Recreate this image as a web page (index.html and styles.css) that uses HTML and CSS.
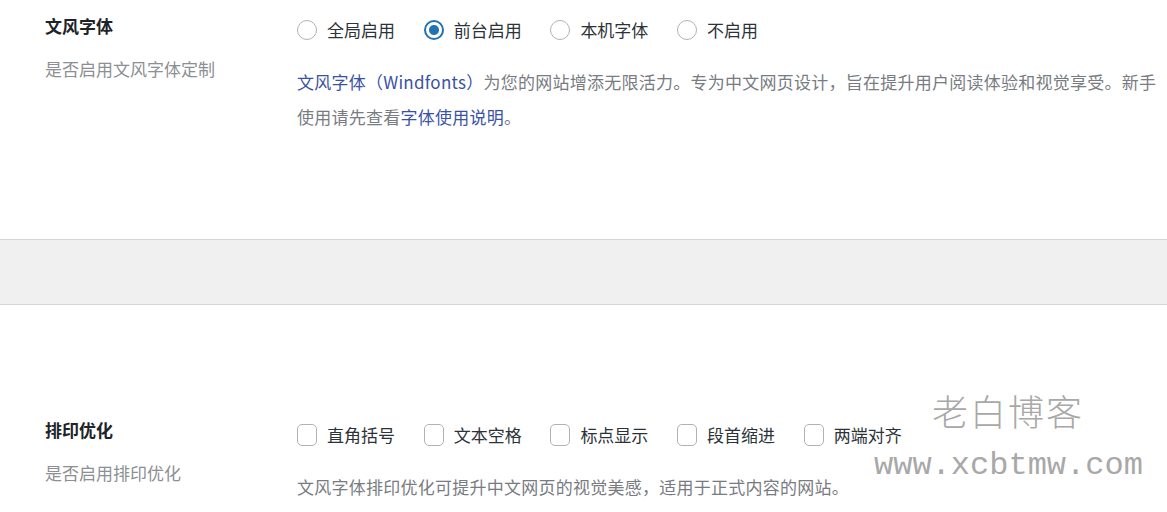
FILE: index.html
```html
<!DOCTYPE html>
<html lang="zh-CN">
<head>
  <meta charset="UTF-8">
  <meta name="viewport" content="width=device-width, initial-scale=1.0">
  <title>文风字体设置</title>
  <link rel="stylesheet" href="styles.css">
</head>
<body>

  <div class="setting setting-first">
    <div class="setting-label">
      <h3 class="setting-title">文风字体</h3>
      <p class="setting-sub">是否启用文风字体定制</p>
    </div>
    <div class="setting-field">
      <div class="option-list">
        <label class="option"><input type="radio" name="mode" class="radio"> 全局启用</label>
        <label class="option"><input type="radio" name="mode" class="radio" checked> 前台启用</label>
        <label class="option"><input type="radio" name="mode" class="radio"> 本机字体</label>
        <label class="option"><input type="radio" name="mode" class="radio"> 不启用</label>
      </div>
      <p class="setting-desc"><a href="#" class="link">文风字体（Windfonts）</a>为您的网站增添无限活力。专为中文网页设计，旨在提升用户阅读体验和视觉享受。新手使用请先查看<a href="#" class="link">字体使用说明</a>。</p>
    </div>
  </div>

  <div class="divider"></div>

  <div class="setting setting-second">
    <div class="setting-label">
      <h3 class="setting-title">排印优化</h3>
      <p class="setting-sub">是否启用排印优化</p>
    </div>
    <div class="setting-field">
      <div class="option-list">
        <label class="option"><input type="checkbox" class="check"> 直角括号</label>
        <label class="option"><input type="checkbox" class="check"> 文本空格</label>
        <label class="option"><input type="checkbox" class="check"> 标点显示</label>
        <label class="option"><input type="checkbox" class="check"> 段首缩进</label>
        <label class="option"><input type="checkbox" class="check"> 两端对齐</label>
      </div>
      <p class="setting-desc">文风字体排印优化可提升中文网页的视觉美感，适用于正式内容的网站。</p>
    </div>
  </div>

  <div class="watermark">
    <div class="watermark-name">老白博客</div>
    <div class="watermark-url">www.xcbtmw.com</div>
  </div>

</body>
</html>
```

FILE: styles.css
```css
* {
  margin: 0;
  padding: 0;
  box-sizing: border-box;
}

html {
  background: #fff;
}

body {
  position: relative;
  font-family: "Noto Sans CJK SC", "Noto Sans", sans-serif;
  font-size: 17px;
  color: #3c434a;
  overflow: hidden;
}

.setting {
  display: flex;
  background: #fff;
}

.setting-first {
  height: 239px;
  padding-top: 14px;
}

.setting-second {
  height: 207px;
  padding-top: 113px;
}

.setting-label {
  width: 297px;
  padding-left: 45px;
  flex-shrink: 0;
}

.setting-title {
  font-size: 17px;
  font-weight: bold;
  line-height: 24px;
  color: #1d2327;
}

.setting-sub {
  margin-top: 19px;
  line-height: 24px;
  color: #8c8f94;
}

.setting-field {
  flex: 1;
  padding-top: 4px;
  padding-right: 8px;
}

.setting-second .setting-field {
  padding-top: 5px;
}

.option-list {
  display: flex;
  gap: 28.7px;
}

.option {
  display: flex;
  align-items: center;
  gap: 10px;
  line-height: 24px;
  color: #2c3338;
  white-space: nowrap;
}

.radio,
.check {
  -webkit-appearance: none;
  appearance: none;
  width: 20px;
  height: 20px;
  border: 1px solid #b0b3b6;
  background: #fff;
  margin: 0;
  flex-shrink: 0;
}

.radio {
  border-radius: 50%;
}

.radio:checked {
  border: 2px solid #2271b1;
  background: radial-gradient(circle, #2271b1 0, #2271b1 4.5px, #fff 5.5px);
}

.check {
  height: 22px;
  border-radius: 5px;
}

.setting-desc {
  margin-top: 22px;
  line-height: 35px;
  letter-spacing: 0.25px;
  color: #787c82;
}

.link {
  color: #3a52a5;
  text-decoration: none;
}

.divider {
  height: 66px;
  background: #f0f0f1;
  border-top: 1px solid #d5d5d7;
  border-bottom: 1px solid #d5d5d7;
}

.watermark {
  position: absolute;
  left: 874px;
  top: 384px;
  color: #a8a8a8;
}

.watermark-name {
  margin-left: 58px;
  font-size: 36px;
  letter-spacing: 2px;
  line-height: 52px;
  font-weight: 300;
}

.watermark-url {
  margin-top: 10px;
  font-family: "Liberation Mono", monospace;
  font-size: 32px;
  line-height: 40px;
}
```
